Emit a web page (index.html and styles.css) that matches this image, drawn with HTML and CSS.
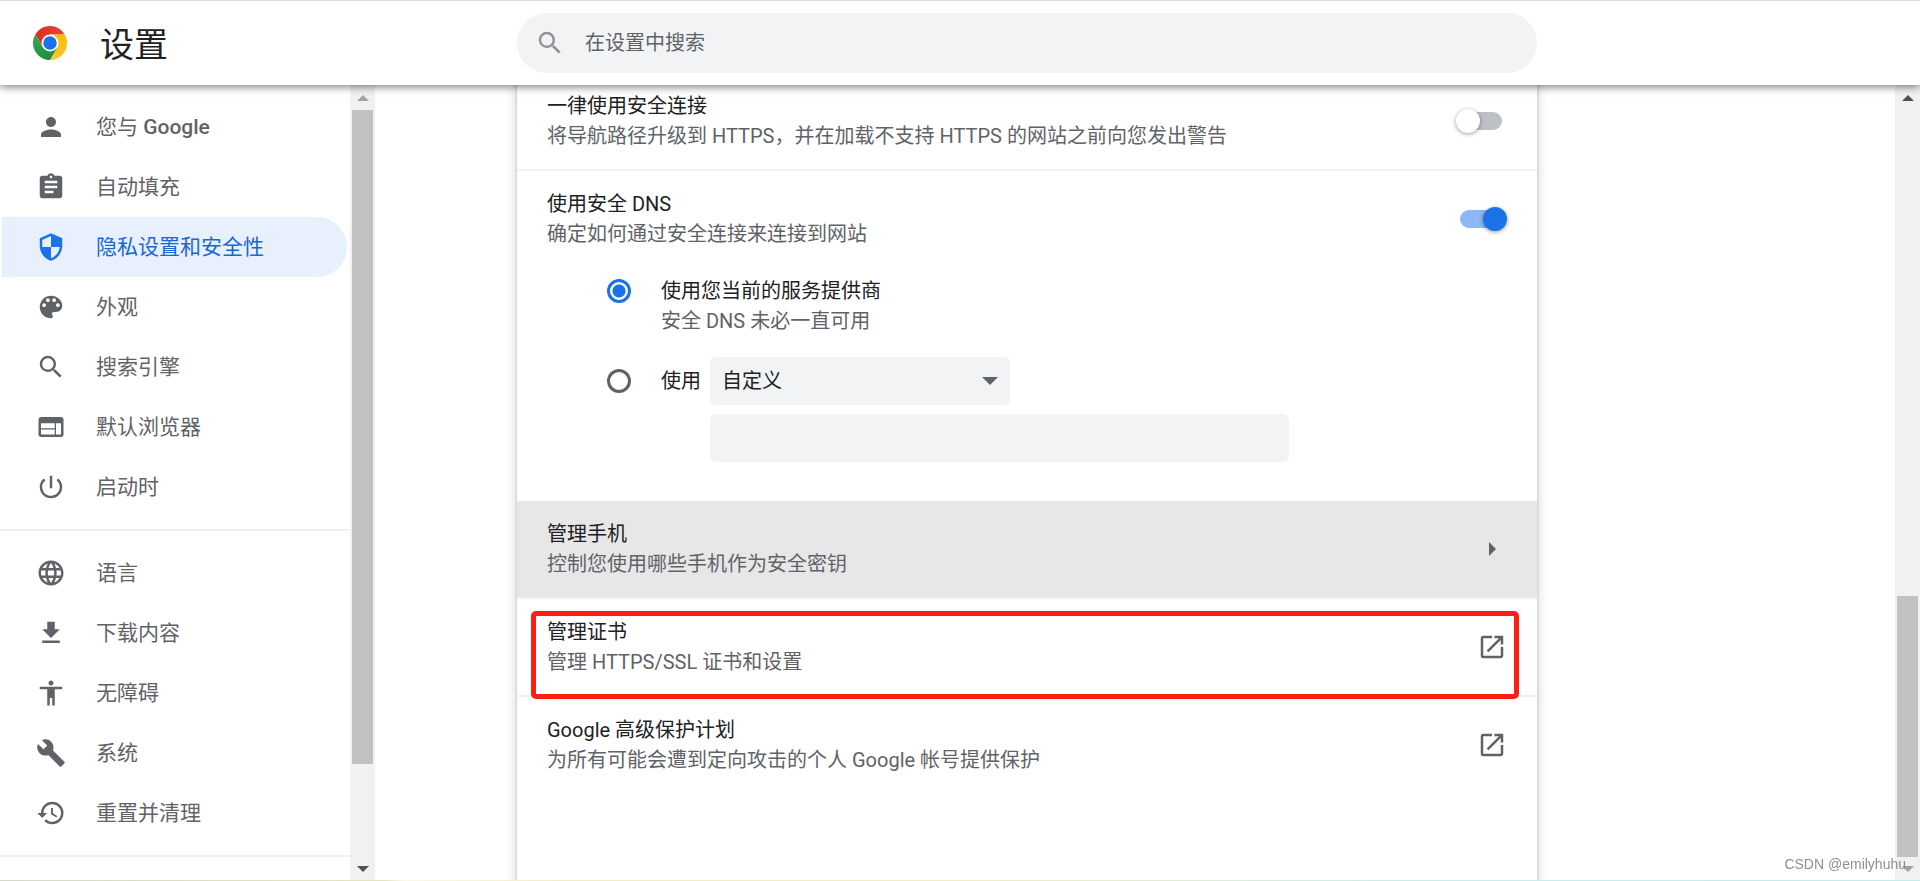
FILE: index.html
```html
<!DOCTYPE html>
<html lang="zh-CN">
<head>
  <meta charset="UTF-8">
  <title>设置</title>
  <meta name="viewport" content="width=device-width, initial-scale=1.0">
  <link rel="stylesheet" href="styles.css">
</head>
<body>

<header class="toolbar">
  <div class="brand">
    <svg class="logo" viewBox="0 0 48 48" aria-hidden="true">
      <defs>
        <linearGradient id="red" x1="3" y1="15" x2="45" y2="15" gradientUnits="userSpaceOnUse">
          <stop offset="0" stop-color="#d93025"/>
          <stop offset="1" stop-color="#ea4335"/>
        </linearGradient>
        <linearGradient id="yellow" x1="21" y1="48" x2="42" y2="12" gradientUnits="userSpaceOnUse">
          <stop offset="0" stop-color="#fcc934"/>
          <stop offset="1" stop-color="#fbbc04"/>
        </linearGradient>
        <linearGradient id="green" x1="27" y1="46" x2="6" y2="10" gradientUnits="userSpaceOnUse">
          <stop offset="0" stop-color="#1e8e3e"/>
          <stop offset="1" stop-color="#34a853"/>
        </linearGradient>
      </defs>
      <path fill="url(#red)" d="M24 12h20.78A24 24 0 0 0 3.22 12l10.39 18L24 24z"/>
      <path fill="url(#yellow)" d="M34.39 30L24 48A24 24 0 0 0 44.78 12H24v12z"/>
      <path fill="url(#green)" d="M13.61 30L3.22 12A24 24 0 0 0 24 48l10.39-18L24 24z"/>
      <circle cx="24" cy="24" r="12" fill="#fff"/>
      <circle cx="24" cy="24" r="9.5" fill="#1a73e8"/>
    </svg>
    <h1>设置</h1>
  </div>
  <label class="search">
    <svg class="icon" viewBox="0 0 24 24" aria-hidden="true"><path d="M15.5 14h-.79l-.28-.27A6.47 6.47 0 0 0 16 9.5 6.5 6.5 0 1 0 9.5 16c1.61 0 3.09-.59 4.23-1.57l.27.28v.79l5 4.99L20.49 19l-4.99-5zm-6 0C7.01 14 5 11.99 5 9.5S7.01 5 9.5 5 14 7.01 14 9.5 11.99 14 9.5 14z"/></svg>
    <input type="search" placeholder="在设置中搜索" aria-label="在设置中搜索">
  </label>
</header>

<div class="container">
  <nav class="menu">
    <a href="#people">
      <svg class="icon" viewBox="0 0 24 24"><path d="M12 12c2.21 0 4-1.79 4-4s-1.79-4-4-4-4 1.79-4 4 1.79 4 4 4zm0 2c-2.67 0-8 1.34-8 4v2h16v-2c0-2.66-5.33-4-8-4z"/></svg>
      <span>您与 <b>Google</b></span>
    </a>
    <a href="#autofill">
      <svg class="icon" viewBox="0 0 24 24"><path d="M19 3h-4.18C14.4 1.84 13.3 1 12 1s-2.4.84-2.82 2H5c-1.1 0-2 .9-2 2v14c0 1.1.9 2 2 2h14c1.1 0 2-.9 2-2V5c0-1.1-.9-2-2-2zm-7 0c.55 0 1 .45 1 1s-.45 1-1 1-1-.45-1-1 .45-1 1-1zm2 14H7v-2h7v2zm3-4H7v-2h10v2zm0-4H7V7h10v2z"/></svg>
      自动填充
    </a>
    <a href="#privacy" class="selected">
      <svg class="icon" viewBox="0 0 24 24"><path d="M12 1L3 5v6c0 5.55 3.84 10.74 9 12 5.16-1.26 9-6.45 9-12V5l-9-4zm0 10.99h7c-.53 4.12-3.28 7.79-7 8.94V12H5V6.3l7-3.11v8.8z"/></svg>
      隐私设置和安全性
    </a>
    <a href="#appearance">
      <svg class="icon" viewBox="0 0 24 24"><path d="M12 3a9 9 0 0 0 0 18c.83 0 1.5-.67 1.5-1.5 0-.39-.15-.74-.39-1.01-.23-.26-.38-.61-.38-.99 0-.83.67-1.5 1.5-1.5H16c2.76 0 5-2.24 5-5 0-4.42-4.03-8-9-8zm-5.5 9c-.83 0-1.5-.67-1.5-1.5S5.67 9 6.5 9 8 9.67 8 10.5 7.33 12 6.5 12zm3-4C8.67 8 8 7.33 8 6.5S8.67 5 9.5 5s1.5.67 1.5 1.5S10.33 8 9.5 8zm5 0c-.83 0-1.5-.67-1.5-1.5S13.67 5 14.5 5s1.5.67 1.5 1.5S15.33 8 14.5 8zm3 4c-.83 0-1.5-.67-1.5-1.5S16.67 9 17.5 9s1.5.67 1.5 1.5-.67 1.5-1.5 1.5z"/></svg>
      外观
    </a>
    <a href="#search">
      <svg class="icon" viewBox="0 0 24 24"><path d="M15.5 14h-.79l-.28-.27A6.47 6.47 0 0 0 16 9.5 6.5 6.5 0 1 0 9.5 16c1.61 0 3.09-.59 4.23-1.57l.27.28v.79l5 4.99L20.49 19l-4.99-5zm-6 0C7.01 14 5 11.99 5 9.5S7.01 5 9.5 5 14 7.01 14 9.5 11.99 14 9.5 14z"/></svg>
      搜索引擎
    </a>
    <a href="#defaultBrowser">
      <svg class="icon" viewBox="0 0 24 24"><path d="M20 4H4c-1.1 0-1.99.9-1.99 2L2 18c0 1.1.9 2 2 2h16c1.1 0 2-.9 2-2V6c0-1.1-.9-2-2-2zm-5 14H4v-4h11v4zm0-5H4V9h11v4zm5 5h-4V9h4v9z"/></svg>
      默认浏览器
    </a>
    <a href="#onStartup">
      <svg class="icon" viewBox="0 0 24 24"><path d="M13 3h-2v10h2V3zm4.83 2.17l-1.42 1.42A6.92 6.92 0 0 1 19 12c0 3.87-3.13 7-7 7A6.995 6.995 0 0 1 7.58 6.58L6.17 5.17A8.932 8.932 0 0 0 3 12a9 9 0 0 0 18 0c0-2.74-1.23-5.18-3.17-6.83z"/></svg>
      启动时
    </a>
    <hr>
    <a href="#languages">
      <svg class="icon" viewBox="0 0 24 24"><path d="M11.99 2C6.47 2 2 6.48 2 12s4.47 10 9.99 10C17.52 22 22 17.52 22 12S17.52 2 11.99 2zm6.93 6h-2.95a15.65 15.65 0 0 0-1.38-3.56A8.03 8.03 0 0 1 18.92 8zM12 4.04c.83 1.2 1.48 2.53 1.91 3.96h-3.82c.43-1.43 1.08-2.76 1.91-3.96zM4.26 14C4.1 13.36 4 12.69 4 12s.1-1.36.26-2h3.38c-.08.66-.14 1.32-.14 2s.06 1.34.14 2H4.26zm.82 2h2.95c.32 1.25.78 2.45 1.38 3.56A7.987 7.987 0 0 1 5.08 16zm2.95-8H5.08a7.987 7.987 0 0 1 4.33-3.56A15.65 15.65 0 0 0 8.03 8zM12 19.96c-.83-1.2-1.48-2.53-1.91-3.96h3.82c-.43 1.43-1.08 2.76-1.91 3.96zM14.34 14H9.66c-.09-.66-.16-1.32-.16-2s.07-1.35.16-2h4.68c.09.65.16 1.32.16 2s-.07 1.34-.16 2zm.25 5.56c.6-1.11 1.06-2.31 1.38-3.56h2.95a8.03 8.03 0 0 1-4.33 3.56zM16.36 14c.08-.66.14-1.32.14-2s-.06-1.34-.14-2h3.38c.16.64.26 1.31.26 2s-.1 1.36-.26 2h-3.38z"/></svg>
      语言
    </a>
    <a href="#downloads">
      <svg class="icon" viewBox="0 0 24 24"><path d="M19 9h-4V3H9v6H5l7 7 7-7zM5 18v2h14v-2H5z"/></svg>
      下载内容
    </a>
    <a href="#accessibility">
      <svg class="icon" viewBox="0 0 24 24"><path d="M12 2c1.1 0 2 .9 2 2s-.9 2-2 2-2-.9-2-2 .9-2 2-2zm9 7h-6v13h-2v-6h-2v6H9V9H3V7h18v2z"/></svg>
      无障碍
    </a>
    <a href="#system">
      <svg class="icon" viewBox="0 0 24 24"><path d="M22.7 19l-9.1-9.1c.9-2.3.4-5-1.5-6.9-2-2-5-2.4-7.4-1.3L9 6 6 9 1.6 4.7C.4 7.1.9 10.1 2.9 12.1c1.9 1.9 4.6 2.4 6.9 1.5l9.1 9.1c.4.4 1 .4 1.4 0l2.3-2.3c.5-.4.5-1.1.1-1.4z"/></svg>
      系统
    </a>
    <a href="#reset">
      <svg class="icon" viewBox="0 0 24 24"><path d="M13 3a9 9 0 0 0-9 9H1l3.89 3.89.07.14L9 12H6c0-3.87 3.13-7 7-7s7 3.13 7 7-3.13 7-7 7c-1.93 0-3.68-.79-4.94-2.06l-1.42 1.42A8.954 8.954 0 0 0 13 21a9 9 0 0 0 0-18zm-1 5v5l4.28 2.54.72-1.21-3.5-2.08V8H12z"/></svg>
      重置并清理
    </a>
    <hr>
  </nav>
  <div class="scrollbar menu-scrollbar" aria-hidden="true">
    <span class="arrow up dim"></span>
    <span class="track"><span class="thumb"></span></span>
    <span class="arrow down"></span>
  </div>

  <main class="content">
    <div class="card">
      <section class="row">
        <label class="text" for="httpsOnly">
          <span class="title">一律使用安全连接</span>
          <span class="sub">将导航路径升级到 HTTPS，并在加载不支持 HTTPS 的网站之前向您发出警告</span>
        </label>
        <input type="checkbox" class="toggle" id="httpsOnly">
      </section>

      <section class="row">
        <label class="text" for="secureDns">
          <span class="title">使用安全 DNS</span>
          <span class="sub">确定如何通过安全连接来连接到网站</span>
        </label>
        <input type="checkbox" class="toggle" id="secureDns" checked>
      </section>

      <div class="dns-options">
        <input type="radio" name="dns" id="dnsCurrent" checked>
        <label class="text" for="dnsCurrent">
          <span class="title">使用您当前的服务提供商</span>
          <span class="sub">安全 DNS 未必一直可用</span>
        </label>
        <input type="radio" name="dns" id="dnsCustom">
        <div class="custom">
          <label class="title" for="dnsCustom">使用</label>
          <div class="fields">
            <div class="select-wrap">
              <select aria-label="服务提供商">
                <option>自定义</option>
              </select>
            </div>
            <input type="text" aria-label="自定义服务提供商">
          </div>
        </div>
      </div>

      <a class="row hovered" href="#phones">
        <span class="text">
          <span class="title">管理手机</span>
          <span class="sub">控制您使用哪些手机作为安全密钥</span>
        </span>
        <svg class="icon" viewBox="0 0 30 30" aria-hidden="true"><path d="M12 8v14l7-7z"/></svg>
      </a>
      <a class="row marked" href="#certificates">
        <span class="text">
          <span class="title">管理证书</span>
          <span class="sub">管理 HTTPS/SSL 证书和设置</span>
        </span>
        <svg class="icon" viewBox="0 0 24 24" aria-hidden="true"><path d="M19 19H5V5h7V3H5a2 2 0 0 0-2 2v14a2 2 0 0 0 2 2h14c1.1 0 2-.9 2-2v-7h-2v7zM14 3v2h3.59l-9.83 9.83 1.41 1.41L19 6.41V10h2V3h-7z"/></svg>
      </a>
      <a class="row" href="#advancedProtection">
        <span class="text">
          <span class="title">Google 高级保护计划</span>
          <span class="sub">为所有可能会遭到定向攻击的个人 Google 帐号提供保护</span>
        </span>
        <svg class="icon" viewBox="0 0 24 24" aria-hidden="true"><path d="M19 19H5V5h7V3H5a2 2 0 0 0-2 2v14a2 2 0 0 0 2 2h14c1.1 0 2-.9 2-2v-7h-2v7zM14 3v2h3.59l-9.83 9.83 1.41 1.41L19 6.41V10h2V3h-7z"/></svg>
      </a>
    </div>
  </main>
  <div class="scrollbar page-scrollbar" aria-hidden="true">
    <span class="arrow up"></span>
    <span class="track"><span class="thumb"></span></span>
    <span class="arrow down dim"></span>
  </div>
</div>

<div class="watermark">CSDN @emilyhuhu</div>

</body>
</html>
```

FILE: styles.css
```css
* {
  box-sizing: border-box;
}
body {
  margin: 0;
  height: 100vh;
  display: flex;
  flex-direction: column;
  overflow: hidden;
  background: #fff;
  color: #202124;
  font-family: Roboto, "Noto Sans CJK SC", sans-serif;
  font-size: 20px;
  line-height: 30px;
}
/* thin strip along the bottom of the window */
body::after {
  content: "";
  position: fixed;
  left: 0;
  right: 0;
  bottom: 0;
  height: 1px;
  background: linear-gradient(90deg, #d5d9c8, #e6e4b8 20%, #fbf7e4 21%, #f3ecc0 30%, #f3ecc0 50%, #c8ecec 75%, #c3ecec);
}
a {
  color: inherit;
  text-decoration: none;
}
.icon {
  width: 30px;
  height: 30px;
  flex: none;
  fill: #5f6368;
}

/* toolbar */
.toolbar {
  position: relative;
  z-index: 1;
  flex: none;
  display: flex;
  align-items: center;
  height: 85px;
  border-top: 1px solid #dadada;
  background: #fff;
  box-shadow: 0 2px 8px rgba(0, 0, 0, 0.5);
}
.brand {
  display: flex;
  align-items: center;
  gap: 33px;
  flex: 0 0 517px;
  padding-left: 33px;
}
.logo {
  width: 34px;
  height: 34px;
}
h1 {
  margin: 0;
  padding-top: 4px;
  font-size: 34px;
  line-height: 40px;
  font-weight: 400;
}
.search {
  display: flex;
  align-items: center;
  gap: 20px;
  flex: 0 1 1020px;
  height: 60px;
  padding: 0 18px;
  border-radius: 30px;
  background: #f1f3f4;
}
.search .icon {
  fill: #8f9296;
}
.search input {
  flex: 1;
  min-width: 0;
  padding: 0;
  border: none;
  outline: none;
  background: none;
  font: inherit;
}
.search input::placeholder {
  color: #5f6368;
}

.container {
  flex: 1;
  min-height: 0;
  display: flex;
}

/* left menu */
.menu {
  flex: 0 0 350px;
  padding-top: 12px;
  overflow: hidden;
  color: #5f6368;
  font-size: 21px;
}
.menu a {
  display: flex;
  align-items: center;
  gap: 30px;
  height: 60px;
  margin: 0 3px 0 2px;
  padding-left: 34px;
  border-radius: 0 30px 30px 0;
}
.menu b {
  font-weight: 500;
}
.menu .selected {
  background: #e8f0fe;
  color: #1967d2;
}
.menu .selected .icon {
  fill: #1a73e8;
}
.menu hr {
  margin: 12px 0;
  border: none;
  border-top: 2px solid #f0f0f0;
}

/* scrollbars */
.scrollbar {
  flex: 0 0 25px;
  display: flex;
  flex-direction: column;
  background: #f1f1f1;
}
.arrow {
  display: flex;
  align-items: center;
  justify-content: center;
  height: 25px;
  color: #505050;
}
.arrow.down {
  height: 24px;
}
.arrow.dim {
  color: #a3a3a3;
}
.arrow::before {
  content: "";
  border: 6px solid transparent;
}
.arrow.up::before {
  border-top: none;
  border-bottom-color: currentColor;
}
.arrow.down::before {
  border-bottom: none;
  border-top-color: currentColor;
}
.track {
  flex: 1;
  display: flex;
  flex-direction: column;
  padding: 0 2px;
}
.thumb {
  background: #c1c1c1;
}
.menu-scrollbar .thumb {
  flex: 7;
}
.menu-scrollbar .track::after {
  content: "";
  flex: 1;
}
.page-scrollbar .thumb {
  height: 35%;
  margin-top: auto;
}

/* settings card */
.content {
  flex: 1;
  min-width: 0;
  display: flex;
  padding-left: 142px;
  overflow: hidden;
}
.card {
  flex: 0 1 1020px;
  margin-top: -12px;
  box-shadow: 0 2px 3px rgba(60, 64, 67, 0.3), 0 3px 9px 3px rgba(60, 64, 67, 0.15);
}
.row {
  position: relative;
  display: flex;
  align-items: center;
  justify-content: space-between;
  min-height: 96px;
  padding: 0 30px;
}
.row + .row {
  min-height: 98px;
  border-top: 2px solid #f2f2f2;
}
.text {
  display: flex;
  flex-direction: column;
}
.sub {
  color: #5f6368;
}
.hovered {
  background: #e7e7e7;
}
.marked::after {
  content: "";
  position: absolute;
  top: 12px;
  right: 18px;
  bottom: -4px;
  left: 14px;
  z-index: 1;
  border: 5px solid #ff1f12;
  border-radius: 5px;
}

.toggle {
  appearance: none;
  display: flex;
  align-items: center;
  flex: none;
  width: 42px;
  height: 18px;
  margin: 0 5px;
  border-radius: 9px;
  background: #bdc1c6;
}
.toggle::before {
  content: "";
  flex: none;
  width: 24px;
  height: 24px;
  margin-left: -4px;
  border-radius: 50%;
  background: #fff;
  box-shadow: 0 1px 4px rgba(0, 0, 0, 0.4);
}
.toggle:checked {
  background: #8cb8f6;
}
.toggle:checked::before {
  margin-left: 23px;
  background: #1a73e8;
}

.dns-options {
  display: grid;
  grid-template-columns: 24px 1fr;
  column-gap: 30px;
  row-gap: 21px;
  padding: 9px 30px 39px 90px;
}
.dns-options input[type="radio"] {
  appearance: none;
  width: 24px;
  height: 24px;
  margin: 3px 0;
  border: 3px solid #5f6368;
  border-radius: 50%;
}
.dns-options input[type="radio"]:checked {
  border-color: #1a73e8;
  background: radial-gradient(circle, #1a73e8 6px, transparent 7px);
}
#dnsCustom {
  margin: 12px 0;
}
.custom {
  display: flex;
  gap: 9px;
}
.custom .title {
  line-height: 48px;
}
.fields {
  flex: 1;
  display: flex;
  flex-direction: column;
  gap: 9px;
  max-width: 579px;
}
.fields select,
.fields input {
  width: 100%;
  height: 48px;
  padding: 0 12px;
  border: none;
  border-radius: 6px;
  background: #f1f3f4;
  color: inherit;
  font: inherit;
}
.fields select {
  appearance: none;
}
.select-wrap {
  position: relative;
  width: 300px;
  height: 48px;
}
.select-wrap::after {
  content: "";
  position: absolute;
  top: 20px;
  right: 12px;
  border: 8px solid transparent;
  border-top-color: #5f6368;
  border-bottom: none;
  pointer-events: none;
}

.watermark {
  position: fixed;
  z-index: 1;
  right: 14px;
  bottom: 8px;
  color: #8f8f8f;
  font-family: "Liberation Sans", sans-serif;
  font-size: 14px;
  line-height: 18px;
}
```
